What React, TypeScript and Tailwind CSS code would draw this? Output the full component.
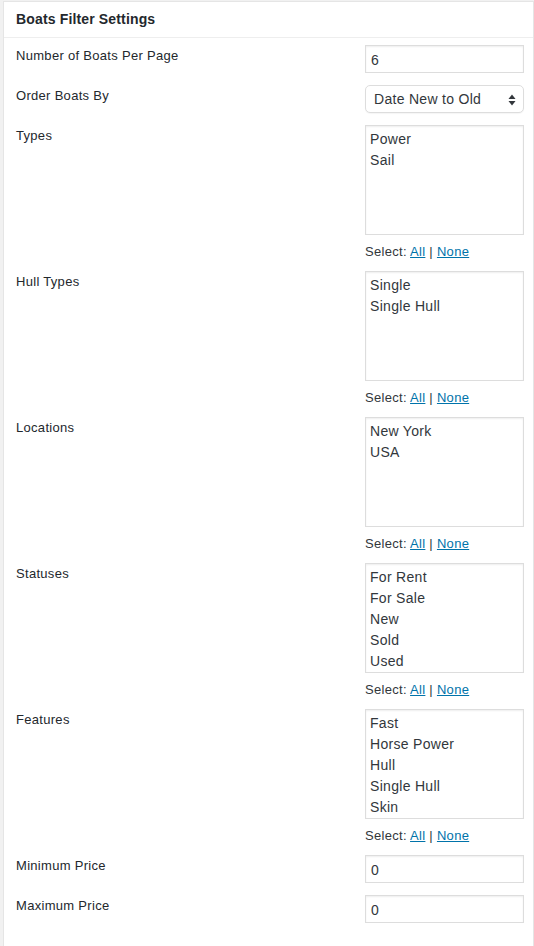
import React from 'react';

type Row =
  | { label: string; kind: 'input'; value: string }
  | { label: string; kind: 'select'; value: string }
  | { label: string; kind: 'multi'; options: string[] };

const rows: Row[] = [
  { label: 'Number of Boats Per Page', kind: 'input', value: '6' },
  { label: 'Order Boats By', kind: 'select', value: 'Date New to Old' },
  { label: 'Types', kind: 'multi', options: ['Power', 'Sail'] },
  { label: 'Hull Types', kind: 'multi', options: ['Single', 'Single Hull'] },
  { label: 'Locations', kind: 'multi', options: ['New York', 'USA'] },
  { label: 'Statuses', kind: 'multi', options: ['For Rent', 'For Sale', 'New', 'Sold', 'Used'] },
  { label: 'Features', kind: 'multi', options: ['Fast', 'Horse Power', 'Hull', 'Single Hull', 'Skin'] },
  { label: 'Minimum Price', kind: 'input', value: '0' },
  { label: 'Maximum Price', kind: 'input', value: '0' },
];

function Arrows() {
  return (
    <svg width="8" height="12" viewBox="0 0 8 12" className="text-[#32373c]">
      <path d="M4 0.5 L7.5 5 L0.5 5 Z" fill="currentColor" />
      <path d="M4 11.5 L7.5 7 L0.5 7 Z" fill="currentColor" />
    </svg>
  );
}

function Control({ row }: { row: Row }) {
  if (row.kind === 'input') {
    return (
      <div className="h-[28px] border border-[#dddddd] bg-white shadow-[inset_0_1px_2px_rgba(0,0,0,0.07)] flex items-center pl-[5px] pt-[2px] text-[14px] tracking-[0.3px] text-[#32373c]">
        {row.value}
      </div>
    );
  }
  if (row.kind === 'select') {
    return (
      <div className="h-[28px] border border-[#dddddd] rounded-[5px] bg-white shadow-[0_1px_1px_rgba(0,0,0,0.04)] flex items-center justify-between pl-[8px] pr-[7px] pt-[1px] text-[14px] tracking-[0.3px] text-[#32373c]">
        <span>{row.value}</span>
        <Arrows />
      </div>
    );
  }
  return (
    <div>
      <div className="h-[110px] border border-[#dddddd] bg-white shadow-[inset_0_1px_2px_rgba(0,0,0,0.07)] py-[3px] pl-[4px] text-[14px] leading-[21px] tracking-[0.3px] text-[#32373c]">
        {row.options.map((o) => (
          <div key={o}>{o}</div>
        ))}
      </div>
      <div className="mt-[7px] h-[20px] leading-[20px] text-[13px] tracking-[0.3px] text-[#32373c]">
        Select: <span className="text-[#0073aa] underline">All</span> |{' '}
        <span className="text-[#0073aa] underline">None</span>
      </div>
    </div>
  );
}

export default function App() {
  return (
    <div className="min-h-[946px] bg-[#f1f1f1] pl-[3px] pt-[1px] font-['Liberation_Sans',Arial,sans-serif]">
      <div className="min-h-[945px] bg-white border border-[#e5e5e5] border-b-0">
        <div className="h-[36px] border-b border-[#eeeeee] flex items-center pl-[12px] text-[14px] font-bold tracking-[0.15px] text-[#23282d]">
          Boats Filter Settings
        </div>
        <div className="pt-[7px]">
          {rows.map((row) => (
            <div
              key={row.label}
              className={`flex pl-[12px] pr-[9px] ${row.kind === 'multi' ? 'pb-[9px]' : 'pb-[12px]'}`}
            >
              <div className="flex-1 pt-[1px] text-[13px] leading-[20px] tracking-[0.3px] text-[#23282d]">
                {row.label}
              </div>
              <div className="w-[159px]">
                <Control row={row} />
              </div>
            </div>
          ))}
        </div>
      </div>
    </div>
  );
}
